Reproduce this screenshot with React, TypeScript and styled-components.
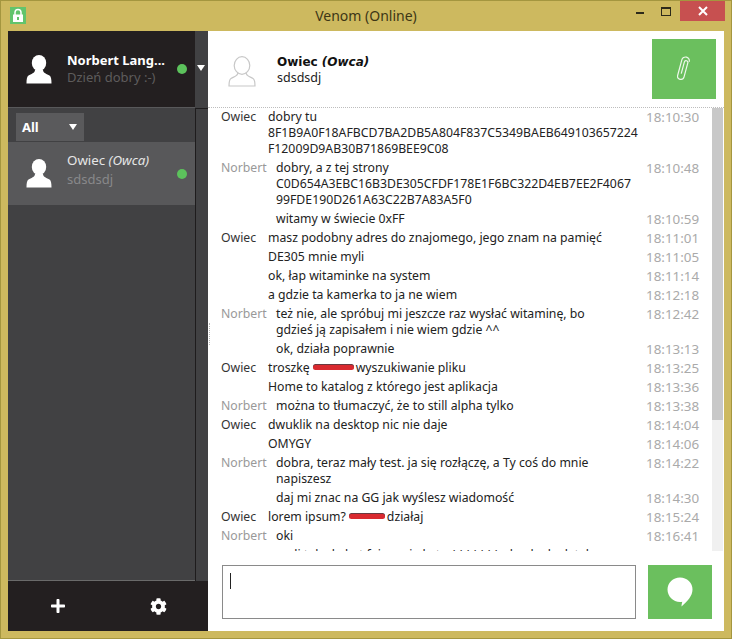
import React from 'react';
import styled, { createGlobalStyle } from 'styled-components';
import { FaCog, FaPlus } from 'react-icons/fa';

type Who = 'Owiec' | 'Norbert';

interface Msg {
  who: Who;
  showName?: boolean;
  lines: React.ReactNode[];
  time: string;
}

const App: React.FC = () => {
  return (
    <Window>
      <GlobalStyle />
      <TitleBar>
        <TitleLeft>
          <LockIcon />
        </TitleLeft>
        <Title>Venom (Online)</Title>
        <Controls>
          <MinButton />
          <MaxButton />
          <CloseButton>
            <svg width="10" height="10" viewBox="0 0 10 10">
              <path d="M1 1 L9 9 M9 1 L1 9" stroke="#fff" strokeWidth="2" />
            </svg>
          </CloseButton>
        </Controls>
      </TitleBar>

      <Body>
        <Sidebar>
          <SidebarTop>
            <ContactColumn>
              <Profile>
                <UserIcon />
                <PersonText>
                  <ProfileName>Norbert Lang...</ProfileName>
                  <ProfileStatus>Dzień dobry :-)</ProfileStatus>
                </PersonText>
                <OnlineDot />
              </Profile>
              <FilterBar>
                <FilterSelect>
                  All
                  <Caret />
                </FilterSelect>
              </FilterBar>
              <ContactRow>
                <UserIcon />
                <ContactText>
                  <ContactName>
                    Owiec <em>(Owca)</em>
                  </ContactName>
                  <ContactStatus>sdsdsdj</ContactStatus>
                </ContactText>
                <OnlineDot />
              </ContactRow>
            </ContactColumn>
            <Strip>
              <StripTop>
                <Caret />
              </StripTop>
              <StripTrack />
            </Strip>
          </SidebarTop>
          <SidebarFooter>
            <FooterButton>
              <FaPlus size={16} />
            </FooterButton>
            <FooterButton>
              <FaCog size={17} />
            </FooterButton>
          </SidebarFooter>
        </Sidebar>

        <Main>
          <SplitHandle />
          <ChatHeader>
            <OutlineAvatar />
            <ChatTitle>
              <ChatName>
                Owiec <em>(Owca)</em>
              </ChatName>
              <ChatStatus>sdsdsdj</ChatStatus>
            </ChatTitle>
            <AttachButton>
              <svg width="14" height="26" viewBox="0 0 14 26" fill="none">
                <path
                  d="M5.5 18 V6 a1.8 1.8 0 0 1 3.6 0 V20.5 a3.3 3.3 0 0 1 -6.6 0 V4.5 a3.8 3.8 0 0 1 7.6 0"
                  transform="rotate(15 6.3 13)"
                  stroke="#eef8ec"
                  strokeWidth="1.2"
                />
              </svg>
            </AttachButton>
          </ChatHeader>

          <History>
            <MessageList>
              {messages.map((m, i) => (
                <Row key={i}>
                  <Name $who={m.who}>{m.showName ? m.who : ''}</Name>
                  <Text>
                    {m.lines.map((line, j) => (
                      <Line key={j}>{line}</Line>
                    ))}
                  </Text>
                  <Time>{m.time}</Time>
                </Row>
              ))}
            </MessageList>
            <Scrollbar>
              <Thumb />
            </Scrollbar>
          </History>

          <Composer>
            <Input>
              <TextCaret />
            </Input>
            <SendButton>
              <svg width="26" height="30" viewBox="0 0 26 30">
                <path
                  d="M13 .5 C20 .5 25.5 5.8 25.5 12.5 C25.5 19 20.5 24 14.5 29.5 C14.6 27.5 15 26 15.3 24.8 C14.5 24.9 13.8 25 13 25 C6 25 .5 19.4 .5 12.5 C.5 5.8 6 .5 13 .5 Z"
                  fill="#fff"
                />
              </svg>
            </SendButton>
          </Composer>
        </Main>
      </Body>
    </Window>
  );
};

const UserIcon: React.FC = () => (
  <svg width="26" height="29" viewBox="0 0 26 29">
    <ellipse cx="13" cy="8" rx="7.2" ry="8" fill="#fff" />
    <path d="M9 15 C9 18 5 19 2.5 20.5 C1 21.5 .5 24 .5 28.5 L25.5 28.5 C25.5 24 25 21.5 23.5 20.5 C21 19 17 18 17 15 Z" fill="#fff" />
  </svg>
);

const OutlineAvatar: React.FC = () => (
  <AvatarSlot>
    <svg width="28" height="31" viewBox="0 0 28 31" fill="none" stroke="#c8c8c8" strokeWidth="1.2">
      <ellipse cx="14" cy="9.5" rx="7.8" ry="8.8" />
      <path d="M9.8 17 C10 20 6 20.6 3 22.4 C1.4 23.4 1 26 1 30 L27 30 C27 26 26.6 23.4 25 22.4 C22 20.6 18 20 18.2 17" />
    </svg>
  </AvatarSlot>
);

const LockIcon: React.FC = () => (
  <svg width="16" height="17" viewBox="0 0 16 17">
    <rect width="16" height="17" fill="#62c46c" />
    <path d="M5 8 V5.5 C5 3.4 6.2 2.4 8 2.4 C9.8 2.4 11 3.4 11 5.5 V8" fill="none" stroke="#fff" strokeWidth="1.5" />
    <rect x="3" y="7.5" width="10" height="7.5" fill="#fff" />
    <rect x="7" y="10" width="2" height="3" fill="#62c46c" />
  </svg>
);

const GlobalStyle = createGlobalStyle`
  html, body {
    margin: 0;
    padding: 0;
    background: #cdb95f;
  }
  em {
    font-style: italic;
  }
`;

const Window = styled.div`
  display: flex;
  flex-direction: column;
  width: 732px;
  height: 639px;
  box-sizing: border-box;
  overflow: hidden;
  background: #cdb95f;
  box-shadow: inset 0 0 0 1px #a4963f;
  font-family: 'Noto Sans', sans-serif;
`;

const TitleBar = styled.div`
  display: grid;
  grid-template-columns: 1fr auto 1fr;
  height: 31px;
  flex: none;
`;

const TitleLeft = styled.div`
  padding: 7px 0 0 10px;
`;

const Title = styled.div`
  font-size: 14px;
  line-height: 31px;
  color: #3c3616;
`;

const Controls = styled.div`
  display: flex;
  justify-content: flex-end;
  align-items: flex-start;
  padding: 1px 7px 0 0;
`;

const MinButton = styled.div`
  width: 8px;
  height: 2px;
  margin: 11px 17px 0 0;
  background: #2c2a1a;
`;

const MaxButton = styled.div`
  width: 8px;
  height: 6px;
  margin: 6px 9px 0 0;
  border: 1px solid #2c2a1a;
  border-top-width: 2px;
`;

const CloseButton = styled.div`
  display: flex;
  align-items: center;
  justify-content: center;
  width: 45px;
  height: 20px;
  background: #c75050;
`;

const Body = styled.div`
  display: flex;
  height: 600px;
  margin: 0 8px;
`;

const Sidebar = styled.div`
  display: flex;
  flex-direction: column;
  width: 200px;
  flex: none;
`;

const SidebarTop = styled.div`
  display: flex;
  height: 550px;
  background: #414143;
`;

const ContactColumn = styled.div`
  width: 187px;
  flex: none;
  border-bottom: 1px solid #6a6a6a;
  box-sizing: border-box;
`;

const Profile = styled.div`
  display: flex;
  align-items: center;
  height: 77px;
  padding: 0 8px 0 18px;
  box-sizing: border-box;
  background: #231f20;
  border-bottom: 1px solid #58585a;
`;

const PersonText = styled.div`
  flex: 1;
  min-width: 0;
  margin-left: 15px;
`;

const ContactText = styled(PersonText)`
  padding-bottom: 8px;
`;

const ProfileName = styled.div`
  font-size: 13px;
  font-weight: 700;
  line-height: 17px;
  color: #fff;
  white-space: nowrap;
`;

const ProfileStatus = styled.div`
  font-size: 13px;
  line-height: 17px;
  color: #5e5c5c;
  white-space: nowrap;
`;

const OnlineDot = styled.div`
  width: 10px;
  height: 10px;
  border-radius: 50%;
  background: #5cc25c;
  flex: none;
`;

const FilterBar = styled.div`
  height: 34px;
  padding: 5px 0 0 8px;
  box-sizing: border-box;
`;

const FilterSelect = styled.div`
  display: flex;
  align-items: center;
  justify-content: space-between;
  width: 68px;
  height: 28px;
  padding: 0 7px 0 6px;
  box-sizing: border-box;
  background: #5a5a5c;
  font-size: 13px;
  font-weight: 700;
  color: #fff;
`;

const Caret = styled.div`
  width: 0;
  height: 0;
  border-left: 4px solid transparent;
  border-right: 4px solid transparent;
  border-top: 6px solid #fff;
`;

const ContactRow = styled.div`
  display: flex;
  align-items: center;
  height: 63px;
  padding: 0 8px 0 18px;
  box-sizing: border-box;
  background: #58585a;
`;

const ContactName = styled.div`
  font-size: 13.3px;
  line-height: 19px;
  color: #e6e6e6;
  white-space: nowrap;
`;

const ContactStatus = styled.div`
  font-size: 13px;
  line-height: 19px;
  color: #88888a;
`;

const Strip = styled.div`
  display: flex;
  flex-direction: column;
  flex: 1;
  background: #414143;
`;

const StripTop = styled.div`
  height: 77px;
  flex: none;
  padding: 34px 0 0 2px;
  box-sizing: border-box;
`;

const StripTrack = styled.div`
  flex: 1;
  border-left: 1px solid #1e1c1d;
  border-top: 1px solid #1e1c1d;
`;

const SidebarFooter = styled.div`
  display: grid;
  grid-template-columns: 100px 100px;
  height: 50px;
  background: #231f20;
`;

const FooterButton = styled.div`
  display: flex;
  align-items: center;
  justify-content: center;
  color: #fff;
`;

const Main = styled.div`
  position: relative;
  display: flex;
  flex-direction: column;
  flex: 1;
  min-width: 0;
  background: #fff;
`;

const SplitHandle = styled.div`
  position: absolute;
  left: 1px;
  top: 292px;
  height: 22px;
  border-left: 1px dotted #b5b5b5;
`;

const ChatHeader = styled.div`
  display: flex;
  align-items: flex-start;
  height: 77px;
  flex: none;
  padding: 8px 8px 0 20px;
  box-sizing: border-box;
  border-bottom: 1px dotted #bdbdbd;
`;

const AvatarSlot = styled.div`
  width: 28px;
  padding-top: 17px;
  flex: none;
`;

const ChatTitle = styled.div`
  flex: 1;
  margin-left: 21px;
  padding-top: 15px;
`;

const ChatName = styled.div`
  font-family: 'DejaVu Sans', sans-serif;
  font-size: 12px;
  font-weight: 700;
  line-height: 16px;
  color: #111;
`;

const ChatStatus = styled.div`
  font-size: 12.5px;
  line-height: 16px;
  color: #222;
`;

const AttachButton = styled.div`
  display: flex;
  align-items: center;
  justify-content: center;
  width: 64px;
  height: 60px;
  background: #6bbf5e;
`;

const History = styled.div`
  display: flex;
  height: 443px;
  flex: none;
  overflow: hidden;
`;

const MessageList = styled.div`
  flex: 1;
  min-width: 0;
  padding: 1px 0 0 13px;
`;

const Row = styled.div`
  display: flex;
  padding-bottom: 3px;
  font-size: 12.25px;
  line-height: 16px;
`;

const Name = styled.div<{ $who: Who }>`
  width: ${(p) => (p.$who === 'Owiec' ? 47 : 55)}px;
  flex: none;
  color: ${(p) => (p.$who === 'Owiec' ? '#333' : '#999')};
`;

const Text = styled.div`
  flex: 1;
  min-width: 0;
  color: #222;
`;

const Line = styled.div`
  white-space: nowrap;
`;

const Scribble = styled.span<{ $width: number }>`
  display: inline-block;
  width: ${(p) => p.$width}px;
  height: 5px;
  margin: 0 2px 0 3px;
  vertical-align: 2px;
  border-radius: 3px;
  background: #d92a30;
  box-shadow: 0 -1px 0 #6a3a40;
`;

const Time = styled.div`
  width: 66px;
  flex: none;
  font-size: 13.4px;
  color: #aaa;
`;

const Scrollbar = styled.div`
  width: 11px;
  flex: none;
  margin-right: 1px;
  background: #f0f0f0;
`;

const Thumb = styled.div`
  height: 312px;
  background: #c8c8c8;
`;

const Composer = styled.div`
  display: flex;
  flex: 1;
  gap: 12px;
  padding: 14px 12px 12px 14px;
  box-sizing: border-box;
`;

const Input = styled.div`
  flex: 1;
  padding: 7px 0 0 7px;
  border: 1px solid #8a8a8a;
  box-sizing: border-box;
`;

const TextCaret = styled.div`
  width: 1px;
  height: 16px;
  background: #222;
`;

const SendButton = styled.div`
  display: flex;
  align-items: center;
  justify-content: center;
  width: 64px;
  flex: none;
  background: #6bbf5e;
`;

const messages: Msg[] = [
  {
    who: 'Owiec',
    showName: true,
    lines: ['dobry tu', '8F1B9A0F18AFBCD7BA2DB5A804F837C5349BAEB649103657224', 'F12009D9AB30B71869BEE9C08'],
    time: '18:10:30',
  },
  {
    who: 'Norbert',
    showName: true,
    lines: ['dobry, a z tej strony', 'C0D654A3EBC16B3DE305CFDF178E1F6BC322D4EB7EE2F4067', '99FDE190D261A63C22B7A83A5F0'],
    time: '18:10:48',
  },
  { who: 'Norbert', lines: ['witamy w świecie 0xFF'], time: '18:10:59' },
  { who: 'Owiec', showName: true, lines: ['masz podobny adres do znajomego, jego znam na pamięć'], time: '18:11:01' },
  { who: 'Owiec', lines: ['DE305 mnie myli'], time: '18:11:05' },
  { who: 'Owiec', lines: ['ok, łap witaminke na system'], time: '18:11:14' },
  { who: 'Owiec', lines: ['a gdzie ta kamerka to ja ne wiem'], time: '18:12:18' },
  {
    who: 'Norbert',
    showName: true,
    lines: ['też nie, ale spróbuj mi jeszcze raz wysłać witaminę, bo', 'gdzieś ją zapisałem i nie wiem gdzie ^^'],
    time: '18:12:42',
  },
  { who: 'Norbert', lines: ['ok, działa poprawnie'], time: '18:13:13' },
  {
    who: 'Owiec',
    showName: true,
    lines: [
      <>
        troszkę<Scribble $width={41} />wyszukiwanie pliku
      </>,
    ],
    time: '18:13:25',
  },
  { who: 'Owiec', lines: ['Home to katalog z którego jest aplikacja'], time: '18:13:36' },
  { who: 'Norbert', showName: true, lines: ['można to tłumaczyć, że to still alpha tylko'], time: '18:13:38' },
  { who: 'Owiec', showName: true, lines: ['dwuklik na desktop nic nie daje'], time: '18:14:04' },
  { who: 'Owiec', lines: ['OMYGY'], time: '18:14:06' },
  {
    who: 'Norbert',
    showName: true,
    lines: ['dobra, teraz mały test. ja się rozłączę, a Ty coś do mnie', 'napiszesz'],
    time: '18:14:22',
  },
  { who: 'Norbert', lines: ['daj mi znac na GG jak wyślesz wiadomość'], time: '18:14:30' },
  {
    who: 'Owiec',
    showName: true,
    lines: [
      <>
        lorem ipsum?<Scribble $width={36} />działaj
      </>,
    ],
    time: '18:15:24',
  },
  { who: 'Norbert', showName: true, lines: ['oki'], time: '18:16:41' },
  { who: 'Norbert', lines: ['mali tak ale kot fajny mi ale to ^^^^^^^ ale ok ok ok tak'], time: '18:17:40' },
];

export default App;
